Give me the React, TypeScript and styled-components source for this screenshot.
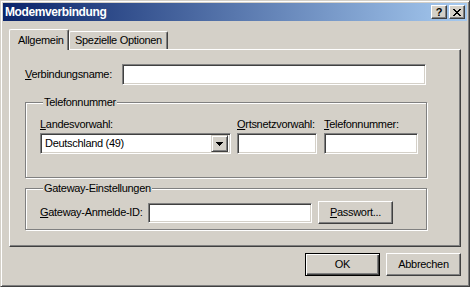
import React from "react";
import styled, { createGlobalStyle } from "styled-components";

const Global = createGlobalStyle`
  html, body { margin: 0; padding: 0; background: #D4D0C8; }
  body { font-family: "Liberation Sans", Arial, sans-serif; font-size: 11px; letter-spacing: -0.3px; color: #000; }
  * { box-sizing: border-box; }
`;

const Window = styled.div`
  width: 470px;
  height: 287px;
  background: #D4D0C8;
  border: 1px solid;
  border-color: #D4D0C8 #404040 #404040 #D4D0C8;
  box-shadow: inset 1px 1px 0 #fff, inset -1px -1px 0 #808080;
  padding: 2px;
  display: flex;
  flex-direction: column;
`;

const TitleBar = styled.div`
  height: 18px;
  flex: none;
  display: flex;
  align-items: center;
  padding: 0 2px 0 2px;
  background: linear-gradient(to right, #0A246A, #A6CAF0);
`;

const Title = styled.div`
  flex: 1;
  color: #fff;
  font-weight: bold;
  font-size: 12px;
  letter-spacing: -0.4px;
  font-family: "Liberation Sans", Arial, sans-serif;
  line-height: 18px;
`;

const CaptionButton = styled.div<{ $gap?: number }>`
  width: 16px;
  height: 14px;
  margin-left: ${(p) => p.$gap ?? 0}px;
  background: #D4D0C8;
  border: 1px solid;
  border-color: #fff #404040 #404040 #fff;
  box-shadow: inset -1px -1px 0 #808080;
  display: flex;
  align-items: center;
  justify-content: center;
  font-weight: bold;
  font-size: 11px;
  letter-spacing: 0;
  line-height: 12px;
`;

const Body = styled.div`
  flex: 1;
  display: flex;
  flex-direction: column;
  padding: 8px 6px 0 6px;
`;

const TabStrip = styled.div`
  display: flex;
  align-items: flex-end;
  height: 20px;
  position: relative;
  z-index: 1;
`;

const Tab = styled.div<{ $active?: boolean; $width: number }>`
  width: ${(p) => p.$width}px;
  height: ${(p) => (p.$active ? 21 : 18)}px;
  margin-bottom: ${(p) => (p.$active ? -1 : 0)}px;
  background: #D4D0C8;
  border-top: 1px solid #fff;
  border-left: 1px solid #fff;
  border-right: 1px solid #404040;
  border-radius: 2px 2px 0 0;
  box-shadow: inset -1px 0 0 #808080;
  padding-top: ${(p) => (p.$active ? 4 : 2)}px;
  padding-left: ${(p) => (p.$active ? 8 : 5)}px;
  white-space: nowrap;
  line-height: 13px;
`;

const Panel = styled.div`
  height: 198px;
  flex: none;
  border: 1px solid;
  border-color: #fff #404040 #404040 #fff;
  box-shadow: inset -1px -1px 0 #808080;
  padding: 14px 0 0 15px;
  display: flex;
  flex-direction: column;
`;

const Row = styled.div`
  display: flex;
  align-items: center;
`;

const Label = styled.label<{ $width?: number }>`
  ${(p) => (p.$width ? `width: ${p.$width}px;` : "")}
  flex: none;
  white-space: nowrap;
  line-height: 13px;
`;

const U = styled.span`
  text-decoration: underline;
`;

const Field = styled.div<{ $width: number; $height?: number }>`
  width: ${(p) => p.$width}px;
  height: ${(p) => p.$height ?? 21}px;
  flex: none;
  background: #fff;
  border: 1px solid;
  border-color: #808080 #fff #fff #808080;
  box-shadow: inset 1px 1px 0 #404040, inset -1px -1px 0 #D4D0C8;
`;

const Combo = styled(Field)`
  display: flex;
  align-items: center;
  padding: 2px;
`;

const ComboText = styled.div`
  flex: 1;
  padding-left: 2px;
  line-height: 15px;
`;

const DropButton = styled.div`
  width: 17px;
  height: 17px;
  background: #D4D0C8;
  border: 1px solid;
  border-color: #D4D0C8 #404040 #404040 #D4D0C8;
  box-shadow: inset 1px 1px 0 #fff, inset -1px -1px 0 #808080;
  display: flex;
  align-items: center;
  justify-content: center;
`;

const Group = styled.fieldset<{ $top: number; $height: number }>`
  margin: ${(p) => p.$top}px 0 0 0;
  width: 402px;
  height: ${(p) => p.$height}px;
  padding: 0 0 0 14px;
  border: 1px solid #808080;
  box-shadow: inset 1px 1px 0 #fff, 1px 1px 0 #fff;
  min-width: 0;
`;

const Legend = styled.legend`
  padding: 0 1px;
  margin-left: 3px;
  background: #D4D0C8;
  line-height: 13px;
`;

const Columns = styled.div`
  display: flex;
  padding-top: 9px;
`;

const Column = styled.div<{ $width: number; $gap: number }>`
  width: ${(p) => p.$width}px;
  display: flex;
  flex-direction: column;
  gap: 2px;
  margin-right: ${(p) => p.$gap}px;
`;

const GatewayRow = styled(Row)`
  padding-top: 6px;
`;

const Button = styled.div<{ $width?: number; $default?: boolean; $left?: number }>`
  width: ${(p) => p.$width ?? 75}px;
  height: 23px;
  flex: none;
  margin-left: ${(p) => p.$left ?? 0}px;
  background: #D4D0C8;
  border: 1px solid;
  border-color: ${(p) => (p.$default ? "#000" : "#fff #404040 #404040 #fff")};
  box-shadow: ${(p) =>
    p.$default
      ? "inset 1px 1px 0 #fff, inset -1px -1px 0 #404040, inset -2px -2px 0 #808080"
      : "inset -1px -1px 0 #808080"};
  display: flex;
  align-items: center;
  justify-content: center;
  line-height: 13px;
`;

const Footer = styled.div`
  display: flex;
  justify-content: flex-end;
  gap: 6px;
  margin-top: 6px;
`;

export default function App() {
  return (
    <>
      <Global />
      <Window>
        <TitleBar>
          <Title>Modemverbindung</Title>
          <CaptionButton>?</CaptionButton>
          <CaptionButton $gap={2}>
            <svg width="8" height="7" viewBox="0 0 8 7" shapeRendering="crispEdges">
              <path d="M0 0h2v1h-2zM6 0h2v1h-2zM1 1h2v1h-2zM5 1h2v1h-2zM2 2h4v1h-4zM3 3h2v1h-2zM2 4h4v1h-4zM1 5h2v1h-2zM5 5h2v1h-2zM0 6h2v1h-2zM6 6h2v1h-2z" fill="#000" />
            </svg>
          </CaptionButton>
        </TitleBar>
        <Body>
          <TabStrip>
            <Tab $active $width={60}>Allgemein</Tab>
            <Tab $width={99}>Spezielle Optionen</Tab>
          </TabStrip>
          <Panel>
            <Row>
              <Label $width={97}><U>V</U>erbindungsname:</Label>
              <Field $width={304} />
            </Row>
            <Group $top={11} $height={82}>
              <Legend>Telefonnummer</Legend>
              <Columns>
                <Column $width={191} $gap={6}>
                  <Label><U>L</U>andesvorwahl:</Label>
                  <Combo $width={191}>
                    <ComboText>Deutschland (49)</ComboText>
                    <DropButton>
                      <svg width="7" height="4" viewBox="0 0 7 4" shapeRendering="crispEdges">
                        <path d="M0 0h7v1h-7zM1 1h5v1h-5zM2 2h3v1h-3zM3 3h1v1h-1z" fill="#000" />
                      </svg>
                    </DropButton>
                  </Combo>
                </Column>
                <Column $width={80} $gap={7}>
                  <Label><U>O</U>rtsnetzvorwahl:</Label>
                  <Field $width={80} />
                </Column>
                <Column $width={94} $gap={0}>
                  <Label><U>T</U>elefonnummer:</Label>
                  <Field $width={94} />
                </Column>
              </Columns>
            </Group>
            <Group $top={4} $height={48}>
              <Legend>Gateway-Einstellungen</Legend>
              <GatewayRow>
                <Label $width={108}><U>G</U>ateway-Anmelde-ID:</Label>
                <Field $width={164} $height={20} />
                <Button $width={75} $left={6}><U>P</U>asswort...</Button>
              </GatewayRow>
            </Group>
          </Panel>
          <Footer>
            <Button $default>OK</Button>
            <Button>Abbrechen</Button>
          </Footer>
        </Body>
      </Window>
    </>
  );
}
